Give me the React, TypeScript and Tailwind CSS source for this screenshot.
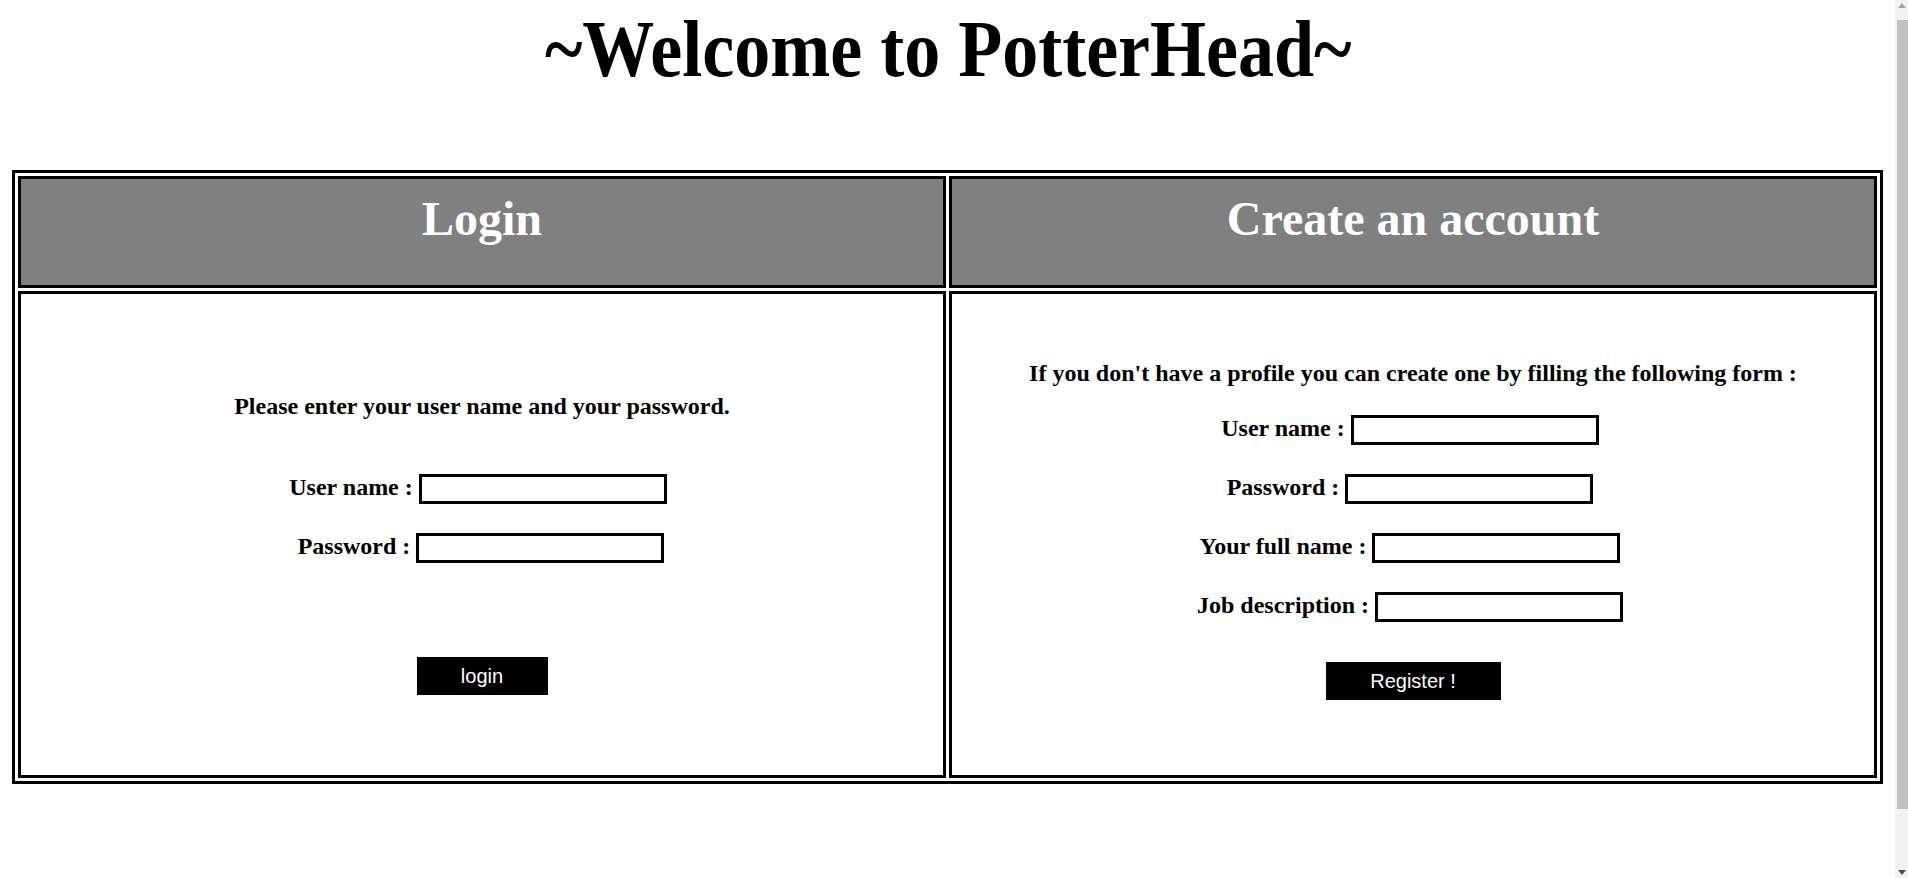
import type { ReactNode } from "react";

type FieldProps = {
  label: string;
  type?: string;
  trail?: string;
};

function Field({ label, type = "text", trail = "pr-[6px]" }: FieldProps) {
  return (
    <div className={`flex h-[30px] items-center gap-[6px] ${trail}`}>
      <label className="mb-[4px] text-[24px] leading-[28px] font-bold">{label}</label>
      <input
        type={type}
        className="h-[30px] w-[248px] border-[3px] border-black bg-white px-1 text-[16px] outline-none"
      />
    </div>
  );
}

function HeadCell({ children }: { children: ReactNode }) {
  return (
    <th className="border-[3px] border-black bg-[#808080] p-0">
      <div className="h-[106px] pt-[16px] text-center text-[48px] leading-[48px] font-bold text-white">
        {children}
      </div>
    </th>
  );
}

function Scrollbar() {
  return (
    <div className="fixed top-0 right-0 flex h-[878px] w-[13px] flex-col bg-[#f1f1f1]">
      <div className="flex h-[20px] items-start justify-center pt-[3px]">
        <svg width="8" height="5" viewBox="0 0 8 5">
          <path d="M0 5 L4 0 L8 5 Z" fill="#a3a3a3" />
        </svg>
      </div>
      <div className="ml-[2px] h-[789px] w-[11px] bg-[#c1c1c1]" />
      <div className="mt-auto flex h-[20px] items-end justify-center pb-[3px]">
        <svg width="8" height="5" viewBox="0 0 8 5">
          <path d="M0 0 L8 0 L4 5 Z" fill="#505050" />
        </svg>
      </div>
    </div>
  );
}

export default function App() {
  return (
    <div className="min-h-[900px] bg-white font-['Liberation_Serif','Times_New_Roman',serif] text-black">
      <div className="w-[1891px]">
        <h1 className="scale-x-[0.9] pt-[9px] pl-[6px] text-center text-[80px] leading-none font-bold">
          ~Welcome to PotterHead~
        </h1>

        <table className="mt-[81px] ml-[12px] w-[1871px] table-fixed border-separate border-spacing-[3px] border-[3px] border-black">
          <thead>
            <tr>
              <HeadCell>Login</HeadCell>
              <HeadCell>Create an account</HeadCell>
            </tr>
          </thead>
          <tbody>
            <tr>
              <td className="border-[3px] border-black p-0 align-top">
                <div className="flex h-[481px] flex-col items-center pt-[98px]">
                  <p className="text-[24px] leading-[28px] font-bold">
                    Please enter your user name and your password.
                  </p>
                  <div className="mt-[54px] flex flex-col items-center gap-[29px]">
                    <Field label="User name :" trail="pr-[8px]" />
                    <Field label="Password :" type="password" trail="pr-[2px]" />
                  </div>
                  <button className="mt-[94px] h-[38px] w-[131px] bg-black font-['Liberation_Sans',Arial,sans-serif] text-[20px] text-white">
                    login
                  </button>
                </div>
              </td>
              <td className="border-[3px] border-black p-0 align-top">
                <div className="flex h-[481px] flex-col items-center pt-[65px]">
                  <p className="text-[24px] leading-[28px] font-bold">
                    If you don't have a profile you can create one by filling the following form :
                  </p>
                  <div className="mt-[28px] flex flex-col items-center gap-[29px]">
                    <Field label="User name :" />
                    <Field label="Password :" type="password" />
                    <Field label="Your full name :" />
                    <Field label="Job description :" />
                  </div>
                  <button className="mt-[40px] h-[38px] w-[175px] bg-black font-['Liberation_Sans',Arial,sans-serif] text-[20px] text-white">
                    Register !
                  </button>
                </div>
              </td>
            </tr>
          </tbody>
        </table>
      </div>

      <Scrollbar />
    </div>
  );
}
